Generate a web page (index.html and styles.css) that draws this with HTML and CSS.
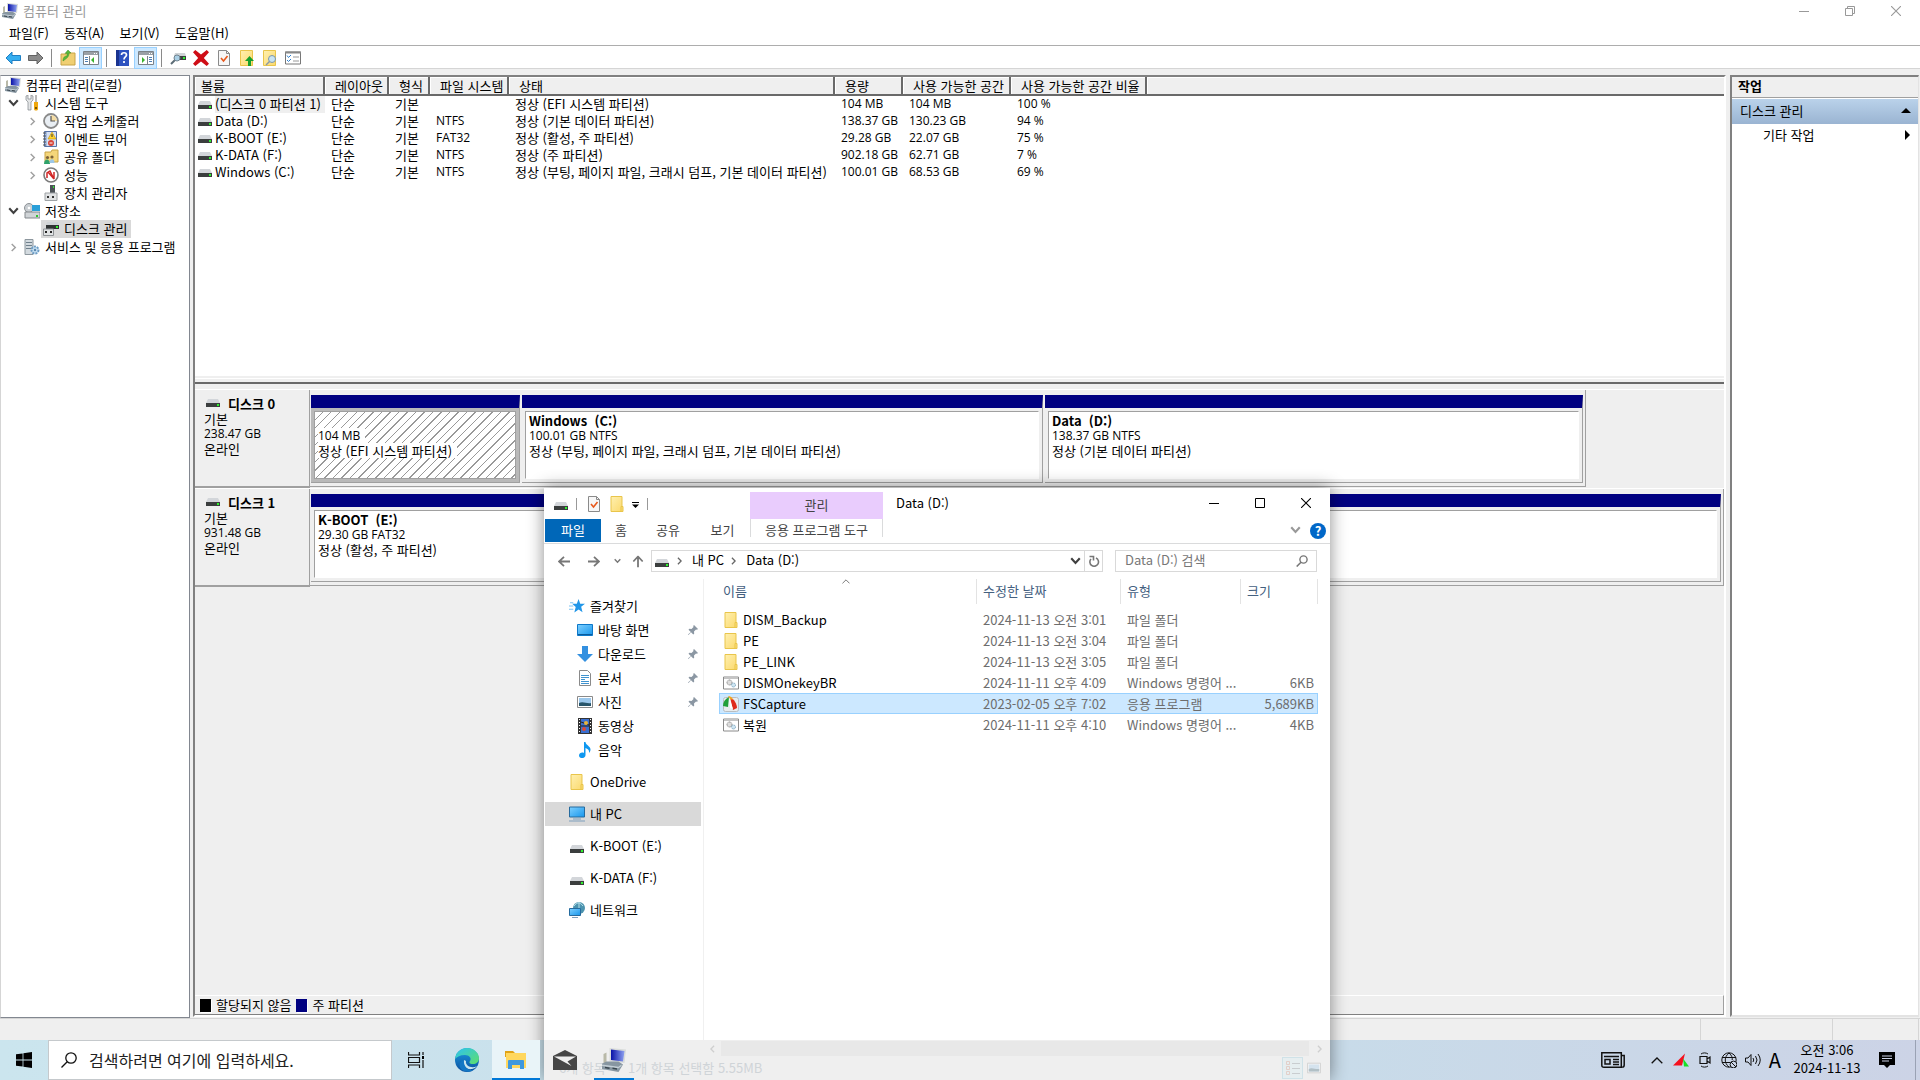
FILE: index.html
```html
<!DOCTYPE html>
<html lang="ko">
<head>
<meta charset="utf-8">
<title>컴퓨터 관리</title>
<link rel="stylesheet" href="styles.css">
</head>
<body>
<svg class="defs" aria-hidden="true">
  <defs>
    <linearGradient id="g-blue" x1="0" y1="0" x2="1" y2="1"><stop offset="0" stop-color="#7fd0ff"/><stop offset="1" stop-color="#1796ec"/></linearGradient>
    <linearGradient id="g-screen" x1="0" y1="0" x2="1" y2="0"><stop offset="0" stop-color="#0a12a8"/><stop offset="1" stop-color="#8fa2f0"/></linearGradient>
    <linearGradient id="g-folder" x1="0" y1="0" x2="1" y2="1"><stop offset="0" stop-color="#fff0b0"/><stop offset="1" stop-color="#fbd96c"/></linearGradient>
    <linearGradient id="g-edge" x1="0" y1="0" x2="1" y2="1"><stop offset="0" stop-color="#2cc3f2"/><stop offset="1" stop-color="#5fdf6a"/></linearGradient>
    <linearGradient id="g-edge2" x1="0" y1="0" x2="0" y2="1"><stop offset="0" stop-color="#1b9de2"/><stop offset="1" stop-color="#0c4f9e"/></linearGradient>
  </defs>
  <symbol id="i-mgmt" viewBox="0 0 16 16"><path d="M1 4l2-1v7H1z" fill="#b9b9a8"/><path d="M5 0l11 1-1 9-10-1z" fill="#d9dcda"/><path d="M6 1l9 1-1 7-8-1z" fill="url(#g-screen)"/><path d="M0 10.500L3 9h8l3 2-3 5-11-2z" fill="#8796a1"/><path d="M0 11l11 1.500L13 11v1l-2 1.500L0 12z" fill="#c4cfd6"/><path d="M2 12.500l3 .5v1l-3-.5zM7 13l3 .5v1L7 14z" fill="#39464f"/></symbol>
  <symbol id="i-drive" viewBox="0 0 14 8"><path d="M2 0h10l2 4H0z" fill="#d3d6da"/><path d="M0 4h14v4H0z" fill="#3b3e3e"/><path d="M11 5h2v2h-2z" fill="#2ef32e"/></symbol>
  <symbol id="i-back" viewBox="0 0 16 14"><path d="M1 7l6-6v3.500h8.500v5H7V13z" fill="#35aef0" stroke="#1f7fc4"/></symbol>
  <symbol id="i-fwd" viewBox="0 0 16 14"><path d="M15 7L9 1v3.500H.5v5H9V13z" fill="#8b8b8b" stroke="#626262"/></symbol>
  <symbol id="i-up" viewBox="0 0 16 16"><path d="M1 4h5l1-1h8v12H1z" fill="#f0cf72" stroke="#c9a447"/><path d="M3 11c0-4 2-5 4-5V3l-2 .5L8 0l3 3H9c0 4-2 5-6 8z" fill="#58b93a" stroke="#3a8f25" stroke-width=".5"/></symbol>
  <symbol id="i-paneL" viewBox="0 0 16 14"><path d="M.5.500h15v13H.5z" fill="#fff" stroke="#7b8288"/><path d="M1 1h14v3H1z" fill="#9aa0a6"/><path d="M11 2h1v1h-1zM13 2h1v1h-1z" fill="#fff"/><path d="M6.500 5v8" stroke="#7b8288"/><path d="M2 6.500h3M2 8.500h3M2 10.500h3" stroke="#4d7fb5"/><path d="M11 6v6L8 9z" fill="#39b32c"/></symbol>
  <symbol id="i-paneR" viewBox="0 0 16 14"><path d="M.5.500h15v13H.5z" fill="#fff" stroke="#7b8288"/><path d="M1 1h14v3H1z" fill="#9aa0a6"/><path d="M11 2h1v1h-1zM13 2h1v1h-1z" fill="#fff"/><path d="M9.500 5v8" stroke="#7b8288"/><path d="M11 6.500h3M11 8.500h3M11 10.500h3" stroke="#4d7fb5"/><path d="M4 6v6l3-3z" fill="#39b32c"/></symbol>
  <symbol id="i-helpbook" viewBox="0 0 14 16"><path d="M0 0h13v16H0z" fill="#2d52c0"/><path d="M0 0h3v16H0z" fill="#1a3490"/><path d="M5.500 5c0-3 5-3 5 0 0 2-2.500 2-2.500 4.500M8 11v2" fill="none" stroke="#fff" stroke-width="1.700"/></symbol>
  <symbol id="i-diskfind" viewBox="0 0 16 14"><path d="M5 2h10l1 3H4z" fill="#cfd3d6"/><path d="M4 5h12v4H4z" fill="#3b3e3e"/><path d="M13 6h2v2h-2z" fill="#2ef32e"/><path d="M1 13l4-4" stroke="#5b6b75" stroke-width="2"/><circle cx="7" cy="7" r="3" fill="#a9cfe5" stroke="#71838f"/></symbol>
  <symbol id="i-x" viewBox="0 0 14 14"><path d="M2 0l5 4 5-4 2 2-4.500 5L14 12l-2 2-5-4-5 4-2-2 4.500-5L0 2z" fill="#cf0d16"/></symbol>
  <symbol id="i-doccheck" viewBox="0 0 12 16"><path d="M.5.500h8l3 3v12H.5z" fill="#f7f7f7" stroke="#8a8a8a"/><path d="M8.500.5v3h3" fill="none" stroke="#8a8a8a"/><path d="M3 8l2.500 3L9.500 6" fill="none" stroke="#e8591c" stroke-width="1.600"/></symbol>
  <symbol id="i-folder" viewBox="0 0 13 16"><path d="M.5.500h11v10h1v5H.5z" fill="url(#g-folder)" stroke="#e9c54b"/><path d="M10.500 15.500v-5h2" fill="none" stroke="#e9c54b"/></symbol>
  <symbol id="i-folderup" viewBox="0 0 14 16"><path d="M.5.500h12v15H.5z" fill="url(#g-folder)" stroke="#e9c54b"/><path d="M9.500 6L14 11h-3v5H8v-5H5z" fill="#16a02a"/></symbol>
  <symbol id="i-foldfind" viewBox="0 0 14 16"><path d="M.5.500h12v15H.5z" fill="url(#g-folder)" stroke="#e9c54b"/><path d="M3 15l4-4" stroke="#8a9aa5" stroke-width="1.500"/><circle cx="9" cy="9" r="3.500" fill="#c8e4f4" stroke="#7d97a8"/></symbol>
  <symbol id="i-list" viewBox="0 0 16 13"><path d="M.5.500h15v12H.5z" fill="#fff" stroke="#777" /><path d="M0 0h16v2H0z" fill="#888"/><path d="M2 4l1.500 2L6 3.500M2 8.500L3.500 10 6 7.500" fill="none" stroke="#2c7fd0"/><path d="M8 5.500h6M8 9.500h6" stroke="#999"/></symbol>
  <symbol id="i-tools" viewBox="0 0 16 16"><path d="M2 1v4l2 2v8h3V7l2-2V1L7 0v4H4V0z" fill="#e3e5e6" stroke="#7f8589" stroke-width=".7"/><path d="M11 0h2v7h-2z" fill="#b9b9b9"/><path d="M10 7h4v7c0 2-4 2-4 0z" fill="#f0a80e"/><path d="M11 12h2v2h-2z" fill="#7c5600"/></symbol>
  <symbol id="i-clock" viewBox="0 0 16 16"><circle cx="8" cy="8" r="7" fill="#e9eef3" stroke="#8a8a8a" stroke-width="1.800"/><path d="M8 8V2a6 6 0 0 1 6 6z" fill="#f4dca4"/><path d="M8 3v5h4" fill="none" stroke="#555" stroke-width="1.200"/></symbol>
  <symbol id="i-event" viewBox="0 0 16 16"><path d="M1.500.5h12v15h-12z" fill="#a7bde0" stroke="#5773a8"/><path d="M0 2h3M0 5h3M0 8h3M0 11h3M0 14h3" stroke="#555"/><path d="M4 1h9v14H4z" fill="#d5e0f2"/><path d="M9 1l4 7H5z" fill="#ffd42d" stroke="#c58d00" stroke-width=".6"/><path d="M9 3v3" stroke="#333"/><circle cx="8" cy="12" r="3" fill="#d84438"/><path d="M6.500 12h3" stroke="#fff"/></symbol>
  <symbol id="i-share" viewBox="0 0 16 16"><path d="M2 3h6l1-2h6v12H2z" fill="#f5d67a" stroke="#c9a447"/><circle cx="4.500" cy="8.500" r="1.600" fill="#7d6238"/><circle cx="9" cy="8" r="1.600" fill="#7d6238"/><path d="M1 15c0-6 6-6 6 0z" fill="#2fa26b"/><path d="M6.500 14c0-5 5-5 5 0z" fill="#9cc7e8"/></symbol>
  <symbol id="i-perf" viewBox="0 0 16 16"><circle cx="8" cy="8" r="7" fill="#fff" stroke="#7b7b7b" stroke-width="1.600"/><path d="M4 11V6l3-2 4 8V5M5 5l6 7" fill="none" stroke="#d12626" stroke-width="1.500"/></symbol>
  <symbol id="i-device" viewBox="0 0 16 16"><path d="M7 0h5v9H7z" fill="#4d5358"/><path d="M10 1h1v2h-1z" fill="#2ef32e"/><path d="M2 8h12v7.500H2z" fill="#e1e3e4" stroke="#9ea2a5"/><path d="M4 11h2v2H4zM9 11h2v2H9z" fill="#333"/></symbol>
  <symbol id="i-storage" viewBox="0 0 16 16"><circle cx="5" cy="5" r="4.500" fill="#c9ced2" stroke="#8d9296"/><circle cx="5" cy="5" r="1.300" fill="#fff"/><path d="M8 2h8v6H8z" fill="#2a9fd8"/><path d="M1 9h15v6H1z" fill="#d0d4d7" stroke="#83888c"/><path d="M12 12h2v2h-2z" fill="#2ec62e"/></symbol>
  <symbol id="i-diskmgmt" viewBox="0 0 16 14"><path d="M4 0h11l1 3H3z" fill="#cfd3d6"/><path d="M3 3h13v4H3z" fill="#2f3232"/><path d="M13 4h2v2h-2z" fill="#2ef32e"/><path d="M.5 7h10v6.500H.5z" fill="#e1e3e4" stroke="#8d9194"/><path d="M2 9h2v2H2zM7 9h2v2H7z" fill="#222"/></symbol>
  <symbol id="i-services" viewBox="0 0 16 16"><path d="M1 .5h8v15H1z" fill="#d3dadf" stroke="#8d979e"/><path d="M2 3.500h6M2 6.500h6M2 9.500h6" stroke="#70808c"/><circle cx="11" cy="11" r="3.500" fill="#c5dff2" stroke="#6d9cc4" stroke-width="2" stroke-dasharray="2 1"/><circle cx="11" cy="11" r="1.200" fill="#5b86ab"/></symbol>
  <symbol id="i-down" viewBox="0 0 8 6"><path d="M.8 1L4 4.500 7.200 1" fill="none" stroke="currentColor" stroke-width="1.600"/></symbol>
  <symbol id="i-right" viewBox="0 0 6 10"><path d="M1 1l4 4-4 4" fill="none" stroke="currentColor" stroke-width="1.600"/></symbol>
  <symbol id="i-min" viewBox="0 0 10 10"><path d="M0 5.500h10" stroke="currentColor"/></symbol>
  <symbol id="i-max" viewBox="0 0 10 10"><path d="M.5.500h9v9h-9z" fill="none" stroke="currentColor"/></symbol>
  <symbol id="i-restore" viewBox="0 0 10 10"><path d="M.5 2.500h7v7h-7zM2.500 2V.5h7v7H8" fill="none" stroke="currentColor"/></symbol>
  <symbol id="i-close" viewBox="0 0 10 10"><path d="M0 0l10 10M10 0L0 10" stroke="currentColor" stroke-width="1.100"/></symbol>
  <symbol id="i-arrow" viewBox="0 0 12 11"><path d="M12 5.500H1M6 .8L1 5.500l5 4.700" fill="none" stroke="currentColor" stroke-width="1.800"/></symbol>
  <symbol id="i-refresh" viewBox="0 0 11 12"><path d="M2.500 4A4.300 4.300 0 1 0 7.500 3M1 1.500h4v4" fill="none" stroke="currentColor" stroke-width="1.600"/></symbol>
  <symbol id="i-search" viewBox="0 0 12 12"><circle cx="7.500" cy="4.500" r="3.600" fill="none" stroke="currentColor" stroke-width="1.400"/><path d="M5 7.200L.7 11.500" stroke="currentColor" stroke-width="1.600"/></symbol>
  <symbol id="i-pin" viewBox="0 0 10 10"><path d="M6 0l4 4-1 .8-1-.3-2 2 .2 2.200-.9.800L3 7.200.5 10 0 9.500 2.800 7 .5 4.700l.8-.9 2.200.2 2-2L5.200 1z" fill="#8b97a3"/></symbol>
  <symbol id="i-star" viewBox="0 0 15 13"><path d="M9 0l1.500 4.300L15 4.500l-3.600 2.800 1.300 5L9 9.700 5 12.500l1.300-5L3 4.500h4.300z" fill="#2196e8"/><path d="M1 3.500h3M0 6.500h4M0 9.500h4" stroke="#7cc3f4"/></symbol>
  <symbol id="i-desktop" viewBox="0 0 16 12"><path d="M.5.500h15v11H.5z" fill="url(#g-blue)" stroke="#0d78c9"/><path d="M1 10h14v1H1z" fill="#0a5b9c"/></symbol>
  <symbol id="i-download" viewBox="0 0 16 16"><path d="M5 0h6v8h5l-8 8-8-8h5z" fill="#3390e0"/></symbol>
  <symbol id="i-doc" viewBox="0 0 12 16"><path d="M.5.500h8l3 3v12H.5z" fill="#fff" stroke="#8a8a8a"/><path d="M2 5.500h8M2 7.500h8M2 9.500h4M2 11.500h8M2 13.500h8" stroke="#3f93cf"/></symbol>
  <symbol id="i-picture" viewBox="0 0 16 12"><path d="M.5.500h15v11H.5z" fill="#fff" stroke="#8a8a8a"/><path d="M2 2h12v8H2z" fill="#9cc8ec"/><path d="M2 7c4-2 8 1 12 0v3H2z" fill="#28556a"/></symbol>
  <symbol id="i-video" viewBox="0 0 14 16"><path d="M0 0h14v16H0z" fill="#333"/><path d="M3 1h8v14H3z" fill="#3a6fd0"/><path d="M3 8h8M3 4l8 3" stroke="#222"/><circle cx="8" cy="5" r="2" fill="#e8b53a"/><circle cx="6" cy="11" r="2" fill="#d84a38"/><path d="M1.500 1v15M12.500 1v15" stroke="#fff" stroke-dasharray="1 2"/></symbol>
  <symbol id="i-music" viewBox="0 0 12 16"><path d="M5 0h1.500c0 3 5 4 5 7.500 0 2-1 3-1.500 3.500.5-3-1-4-3.500-5v7c0 4-6.500 4-6.500.5C0 11 3 10 5 11z" fill="#0f98f0"/></symbol>
  <symbol id="i-pc" viewBox="0 0 16 15"><path d="M.5.500h15v10H.5z" fill="url(#g-blue)" stroke="#256a9e"/><path d="M4 12h8v1H4zM0 14h16v1H0z" fill="#7fa0bd"/></symbol>
  <symbol id="i-net" viewBox="0 0 16 16"><circle cx="10" cy="6" r="6" fill="#4c93ae"/><path d="M5 4c3-4 6-4 9 0M10 0v12" stroke="#b8e0ea" fill="none"/><path d="M.5 6.500h11v7H.5z" fill="url(#g-blue)" stroke="#256a9e"/><path d="M3 15h6v1H3z" fill="#7fa0bd"/></symbol>
  <symbol id="i-bat" viewBox="0 0 16 13"><path d="M.5.500h15v12H.5z" fill="#fff" stroke="#8a8a8a"/><path d="M1 1h14v1.500H1z" fill="#c4c4c4"/><circle cx="6.500" cy="6" r="2.500" fill="#ddd" stroke="#888" stroke-dasharray="1.200 .6"/><circle cx="10.500" cy="8.500" r="2" fill="#cfe6f3" stroke="#7aa4bd" stroke-dasharray="1.200 .6"/></symbol>
  <symbol id="i-fs" viewBox="0 0 16 16"><rect x=".5" y="1.500" width="15" height="14" rx="2" fill="#e8ecee" stroke="#b9bdc0"/><path d="M6 1C2 3 0 6 0 10l5 1z" fill="#21a03a"/><path d="M7 1c4 2 7 7 7 11l-4 2z" fill="#df2a1c"/><path d="M6 1l1 11 3 1z" fill="#fff"/><path d="M5 0c3 0 4 2 5 4L7 3z" fill="#f4a81c"/></symbol>
  <symbol id="i-win" viewBox="0 0 16 16"><path d="M0 2.300l6.600-.9v6.200H0zM7.400 1.200L16 0v7.600H7.400zM0 8.400h6.600v6.200L0 13.700zM7.400 8.400H16V16l-8.600-1.200z"/></symbol>
  <symbol id="i-search2" viewBox="0 0 16 16"><circle cx="10" cy="6" r="5.200" fill="none" stroke="#111" stroke-width="1.300"/><path d="M6.200 9.800L.5 15.500" stroke="#111" stroke-width="1.300"/></symbol>
  <symbol id="i-taskview" viewBox="0 0 16 16"><path d="M.5 0v3h11V0M.5 16v-3h11v3M.5 5.500h11v5H.5z" fill="none" stroke="#111" stroke-width="1.200"/><path d="M15 0v3M15 8v8" stroke="#111" stroke-width="1.200"/><path d="M14 4h2v3h-2z"/></symbol>
  <symbol id="i-edge" viewBox="0 0 24 24"><circle cx="12" cy="12" r="12" fill="url(#g-edge2)"/><path d="M0 11C1 4 6 0 12 0c7 0 12 5 12 10 0 4-3 6-6 6-4 0-4-2-3-3 2-3-1-6-5-6-5 0-8 2-10 4z" fill="url(#g-edge)"/><path d="M9 12c-2 5 2 10 8 9 2-.5 4-1.500 5-3-5 3-12 0-11-5z" fill="#cbe5ee"/><path d="M9 12c-1 5 3 11 9 10-3 2.500-9 2.500-12-1-3-4-1-8 3-9z" fill="#1577c4"/></symbol>
  <symbol id="i-explorer" viewBox="0 0 22 18"><path d="M0 0h8l2 2h10v4H0z" fill="#e0a216"/><path d="M1 2h20v15H1z" fill="#ffd75e"/><path d="M3 18V10q0-1 1-1h14q1 0 1 1v8h-4v-4H7v4z" fill="#3f98dd"/></symbol>
  <symbol id="i-mail" viewBox="0 0 24 20"><path d="M0 6l12-6 12 6v14H0z" fill="#464646"/><path d="M1 6.500h22l-8.500 5 4 4.500z" fill="#efefef"/></symbol>
  <symbol id="i-news" viewBox="0 0 24 16"><path d="M.8.800h19.500v14.400H3q-2.200 0-2.200-2z" fill="none" stroke="#111" stroke-width="1.500"/><path d="M20 3.500h3.200V13q0 2.200-2 2.200" fill="none" stroke="#111" stroke-width="1.500"/><path d="M3 4.500h15M12 7.500h6M12 10h6M12 12.500h6" stroke="#111" stroke-width="1.300"/><path d="M4 7.500h5v4.500H4z" fill="none" stroke="#111" stroke-width="1.500"/></symbol>
  <symbol id="i-chevup" viewBox="0 0 12 7"><path d="M.7 6.300L6 1l5.300 5.300" fill="none" stroke="currentColor" stroke-width="1.300"/></symbol>
  <symbol id="i-rg" viewBox="0 0 16 13"><path d="M12 0L9 12H0z" fill="#f5101e"/><path d="M10 5l6 8h-5z" fill="#17e024"/></symbol>
  <symbol id="i-meet" viewBox="0 0 12 16"><path d="M1 4.500h7v7H1zM8 7l3-2v6L8 9" fill="none" stroke="#111" stroke-width="1.200"/><path d="M2 2c2-1.500 5-1.500 7 0M2 14c2 1.500 5 1.500 7 0" fill="none" stroke="#111"/></symbol>
  <symbol id="i-globe" viewBox="0 0 16 16"><circle cx="8" cy="8" r="7.200" fill="none" stroke="#111"/><path d="M1 5.500h14M1 10.500h8M8 1C3 5 3 11 8 15M8 1c3 2.500 3.500 5 3.200 7" fill="none" stroke="#111"/><circle cx="12.500" cy="12.500" r="3.400" fill="#ccd6e8" stroke="#111"/><path d="M10 10l5 5" stroke="#111"/></symbol>
  <symbol id="i-vol" viewBox="0 0 16 14"><path d="M.5 5v4H3l3 3.500v-11L3 5zM8 5q1.500 2 0 4M10.500 3q3 4 0 8M13 1q4.500 6 0 12" fill="none" stroke="#111"/></symbol>
  <symbol id="i-action" viewBox="0 0 16 16"><path d="M0 0h16v13h-5l-3 3-3-3H0z"/><path d="M3 4h10M3 6.500h10M3 9h7" stroke="#ccd3e6"/></symbol>
  <symbol id="i-details" viewBox="0 0 14 14"><path d="M.5.500h3v3h-3zM.5 5.500h3v3h-3zM.5 10.500h3v3h-3z" fill="none" stroke="#e3cfc9"/><path d="M6 2.500h8M6 7.500h8M6 12.500h8" stroke="#c9cdd0"/></symbol>
</svg>

<div class="console">
  <header class="titlebar">
    <svg class="s16"><use href="#i-mgmt"/></svg>
    <h1>컴퓨터 관리</h1>
    <div class="winbtns">
      <button aria-label="최소화"><svg class="s10"><use href="#i-min"/></svg></button>
      <button aria-label="이전 크기로"><svg class="s10"><use href="#i-restore"/></svg></button>
      <button aria-label="닫기"><svg class="s10"><use href="#i-close"/></svg></button>
    </div>
  </header>
  <nav class="menubar">
    <button>파일(F)</button><button>동작(A)</button><button>보기(V)</button><button>도움말(H)</button>
  </nav>
  <div class="toolbar">
    <button aria-label="뒤로"><svg class="s16"><use href="#i-back"/></svg></button>
    <button aria-label="앞으로"><svg class="s16"><use href="#i-fwd"/></svg></button>
    <span class="sep"></span>
    <button aria-label="위로"><svg class="s16"><use href="#i-up"/></svg></button>
    <button class="on" aria-label="콘솔 트리"><svg class="s16"><use href="#i-paneL"/></svg></button>
    <span class="sep"></span>
    <button aria-label="도움말"><svg class="s16"><use href="#i-helpbook"/></svg></button>
    <button class="on" aria-label="작업 창"><svg class="s16"><use href="#i-paneR"/></svg></button>
    <span class="sep"></span>
    <button aria-label="다시 검사"><svg class="s16"><use href="#i-diskfind"/></svg></button>
    <button aria-label="삭제"><svg class="s16"><use href="#i-x"/></svg></button>
    <button aria-label="속성"><svg class="s16"><use href="#i-doccheck"/></svg></button>
    <button aria-label="열기"><svg class="s16"><use href="#i-folderup"/></svg></button>
    <button aria-label="탐색"><svg class="s16"><use href="#i-foldfind"/></svg></button>
    <button aria-label="목록"><svg class="s16"><use href="#i-list"/></svg></button>
  </div>

  <main class="panes">
    <nav class="tree">
      <a href="#" class="root"><svg class="s16"><use href="#i-mgmt"/></svg>컴퓨터 관리(로컬)</a>
      <a href="#"><svg class="tw open"><use href="#i-down"/></svg><svg class="s16"><use href="#i-tools"/></svg>시스템 도구</a>
      <a href="#" class="sub"><svg class="tw"><use href="#i-right"/></svg><svg class="s16"><use href="#i-clock"/></svg>작업 스케줄러</a>
      <a href="#" class="sub"><svg class="tw"><use href="#i-right"/></svg><svg class="s16"><use href="#i-event"/></svg>이벤트 뷰어</a>
      <a href="#" class="sub"><svg class="tw"><use href="#i-right"/></svg><svg class="s16"><use href="#i-share"/></svg>공유 폴더</a>
      <a href="#" class="sub"><svg class="tw"><use href="#i-right"/></svg><svg class="s16"><use href="#i-perf"/></svg>성능</a>
      <a href="#" class="sub"><span class="tw"></span><svg class="s16"><use href="#i-device"/></svg>장치 관리자</a>
      <a href="#"><svg class="tw open"><use href="#i-down"/></svg><svg class="s16"><use href="#i-storage"/></svg>저장소</a>
      <a href="#" class="sub"><span class="tw"></span><span class="picked"><svg class="s16"><use href="#i-diskmgmt"/></svg>디스크 관리</span></a>
      <a href="#"><svg class="tw"><use href="#i-right"/></svg><svg class="s16"><use href="#i-services"/></svg>서비스 및 응용 프로그램</a>
    </nav>

    <section class="disks">
      <div class="volumes">
        <table>
          <colgroup><col class="c130"><col class="c64"><col class="c41"><col class="c79"><col class="c326"><col class="c68"><col class="c108"><col class="c136"><col></colgroup>
          <thead><tr><th>볼륨</th><th>레이아웃</th><th>형식</th><th>파일 시스템</th><th>상태</th><th>용량</th><th>사용 가능한 공간</th><th>사용 가능한 공간 비율</th><th></th></tr></thead>
          <tbody>
            <tr><td><svg class="dr"><use href="#i-drive"/></svg><span class="hot">(디스크 0 파티션 1)</span></td><td>단순</td><td>기본</td><td class="lat"></td><td>정상 (EFI 시스템 파티션)</td><td class="lat">104 MB</td><td class="lat">104 MB</td><td class="lat">100 %</td><td></td></tr>
            <tr><td><svg class="dr"><use href="#i-drive"/></svg><span>Data (D:)</span></td><td>단순</td><td>기본</td><td class="lat">NTFS</td><td>정상 (기본 데이터 파티션)</td><td class="lat">138.37 GB</td><td class="lat">130.23 GB</td><td class="lat">94 %</td><td></td></tr>
            <tr><td><svg class="dr"><use href="#i-drive"/></svg><span>K-BOOT (E:)</span></td><td>단순</td><td>기본</td><td class="lat">FAT32</td><td>정상 (활성, 주 파티션)</td><td class="lat">29.28 GB</td><td class="lat">22.07 GB</td><td class="lat">75 %</td><td></td></tr>
            <tr><td><svg class="dr"><use href="#i-drive"/></svg><span>K-DATA (F:)</span></td><td>단순</td><td>기본</td><td class="lat">NTFS</td><td>정상 (주 파티션)</td><td class="lat">902.18 GB</td><td class="lat">62.71 GB</td><td class="lat">7 %</td><td></td></tr>
            <tr><td><svg class="dr"><use href="#i-drive"/></svg><span>Windows (C:)</span></td><td>단순</td><td>기본</td><td class="lat">NTFS</td><td>정상 (부팅, 페이지 파일, 크래시 덤프, 기본 데이터 파티션)</td><td class="lat">100.01 GB</td><td class="lat">68.53 GB</td><td class="lat">69 %</td><td></td></tr>
          </tbody>
        </table>
      </div>
      <div class="splitter"></div>
      <div class="graph">
        <article class="disk">
          <div class="label"><h2><svg class="dr"><use href="#i-drive"/></svg>디스크 0</h2><p>기본</p><p class="lat">238.47 GB</p><p>온라인</p></div>
          <div class="parts" style="width:1276px">
            <div class="part efi" style="flex-grow:202"><div class="box"><p></p><p><mark class="lat">104 MB</mark></p><p><mark>정상 (EFI 시스템 파티션)</mark></p></div></div>
            <div class="part" style="flex-grow:514"><div class="box"><h3>Windows&nbsp; (C:)</h3><p class="lat">100.01 GB NTFS</p><p>정상 (부팅, 페이지 파일, 크래시 덤프, 기본 데이터 파티션)</p></div></div>
            <div class="part" style="flex-grow:531"><div class="box"><h3>Data&nbsp; (D:)</h3><p class="lat">138.37 GB NTFS</p><p>정상 (기본 데이터 파티션)</p></div></div>
          </div>
        </article>
        <article class="disk">
          <div class="label"><h2><svg class="dr"><use href="#i-drive"/></svg>디스크 1</h2><p>기본</p><p class="lat">931.48 GB</p><p>온라인</p></div>
          <div class="parts" style="width:100%">
            <div class="part" style="flex-grow:1"><div class="box"><h3>K-BOOT&nbsp; (E:)</h3><p class="lat">29.30 GB FAT32</p><p>정상 (활성, 주 파티션)</p></div></div>
          </div>
        </article>
      </div>
      <div class="legend"><i class="black"></i><span>할당되지 않음</span><i class="navy"></i><span>주 파티션</span></div>
    </section>

    <aside class="actions">
      <h2>작업</h2>
      <button class="group">디스크 관리<svg class="tri" viewBox="0 0 10 5"><path d="M5 0l5 5H0z"/></svg></button>
      <button class="more">기타 작업<svg class="trir" viewBox="0 0 5 10"><path d="M0 0l5 5-5 5z"/></svg></button>
    </aside>
  </main>
  <footer class="status"><span class="grow"></span><span class="c132"></span><span class="c86"></span></footer>
</div>

<section class="window">
  <header class="wtitle">
    <div class="quick">
      <svg class="dr"><use href="#i-drive"/></svg><span class="bar"></span>
      <button aria-label="속성"><svg class="s16"><use href="#i-doccheck"/></svg></button>
      <button aria-label="새 폴더"><svg class="s16"><use href="#i-folder"/></svg></button>
      <button aria-label="사용자 지정"><svg class="cust" viewBox="0 0 7 6"><path d="M0 0h7v1H0zM0 2.500h7L3.500 6z"/></svg></button><span class="bar"></span>
    </div>
    <div class="ctx">관리</div>
    <h2>Data (D:)</h2>
    <div class="winbtns">
      <button aria-label="최소화"><svg class="s10"><use href="#i-min"/></svg></button>
      <button aria-label="최대화"><svg class="s10"><use href="#i-max"/></svg></button>
      <button aria-label="닫기"><svg class="s10"><use href="#i-close"/></svg></button>
    </div>
  </header>
  <nav class="tabs">
    <button class="file">파일</button><button class="home">홈</button><button class="shareb">공유</button><button class="view">보기</button><button class="tool">응용 프로그램 도구</button>
    <span class="grow"></span>
    <button class="fold" aria-label="리본 최소화"><svg class="tw open"><use href="#i-down"/></svg></button>
    <button class="help" aria-label="도움말">?</button>
  </nav>
  <div class="address">
    <button aria-label="뒤로"><svg class="arr"><use href="#i-arrow"/></svg></button>
    <button aria-label="앞으로"><svg class="arr flip"><use href="#i-arrow"/></svg></button>
    <button class="slim" aria-label="최근"><svg class="tiny"><use href="#i-down"/></svg></button>
    <button class="upb" aria-label="위로"><svg class="arr turn"><use href="#i-arrow"/></svg></button>
    <div class="crumbs">
      <svg class="dr"><use href="#i-drive"/></svg><svg class="gt"><use href="#i-right"/></svg><a href="#">내 PC</a><svg class="gt"><use href="#i-right"/></svg><a href="#">Data (D:)</a>
      <span class="grow"></span><button aria-label="이전 위치"><svg class="tw open"><use href="#i-down"/></svg></button><button class="ref" aria-label="새로 고침"><svg class="s12"><use href="#i-refresh"/></svg></button>
    </div>
    <div class="find"><input type="text" aria-label="검색" placeholder="Data (D:) 검색"><svg class="s12"><use href="#i-search"/></svg></div>
  </div>
  <div class="wbody">
    <nav class="places">
      <a href="#" class="top"><svg class="s16"><use href="#i-star"/></svg>즐겨찾기</a>
      <a href="#"><svg class="s16"><use href="#i-desktop"/></svg>바탕 화면<svg class="pin"><use href="#i-pin"/></svg></a>
      <a href="#"><svg class="s16"><use href="#i-download"/></svg>다운로드<svg class="pin"><use href="#i-pin"/></svg></a>
      <a href="#"><svg class="s16"><use href="#i-doc"/></svg>문서<svg class="pin"><use href="#i-pin"/></svg></a>
      <a href="#"><svg class="s16"><use href="#i-picture"/></svg>사진<svg class="pin"><use href="#i-pin"/></svg></a>
      <a href="#"><svg class="s16"><use href="#i-video"/></svg>동영상</a>
      <a href="#"><svg class="s16"><use href="#i-music"/></svg>음악</a>
      <a href="#" class="top"><svg class="s16"><use href="#i-folder"/></svg>OneDrive</a>
      <a href="#" class="top cur"><svg class="s16"><use href="#i-pc"/></svg>내 PC</a>
      <a href="#" class="top"><svg class="s16 low"><use href="#i-drive"/></svg>K-BOOT (E:)</a>
      <a href="#" class="top"><svg class="s16 low"><use href="#i-drive"/></svg>K-DATA (F:)</a>
      <a href="#" class="top"><svg class="s16"><use href="#i-net"/></svg>네트워크</a>
    </nav>
    <div class="files">
      <svg class="sort"><use href="#i-chevup"/></svg>
      <table>
        <colgroup><col class="f258"><col class="f144"><col class="f120"><col class="f77"></colgroup>
        <thead><tr><th>이름</th><th>수정한 날짜</th><th>유형</th><th>크기</th></tr></thead>
        <tbody>
          <tr><td><svg class="s16"><use href="#i-folder"/></svg>DISM_Backup</td><td>2024-11-13 오전 3:01</td><td>파일 폴더</td><td></td></tr>
          <tr><td><svg class="s16"><use href="#i-folder"/></svg>PE</td><td>2024-11-13 오전 3:04</td><td>파일 폴더</td><td></td></tr>
          <tr><td><svg class="s16"><use href="#i-folder"/></svg>PE_LINK</td><td>2024-11-13 오전 3:05</td><td>파일 폴더</td><td></td></tr>
          <tr><td><svg class="s16"><use href="#i-bat"/></svg>DISMOnekeyBR</td><td>2024-11-11 오후 4:09</td><td>Windows 명령어 ...</td><td>6KB</td></tr>
          <tr class="sel"><td><svg class="s16"><use href="#i-fs"/></svg>FSCapture</td><td>2023-02-05 오후 7:02</td><td>응용 프로그램</td><td>5,689KB</td></tr>
          <tr><td><svg class="s16"><use href="#i-bat"/></svg>복원</td><td>2024-11-11 오후 4:10</td><td>Windows 명령어 ...</td><td>4KB</td></tr>
        </tbody>
      </table>
    </div>
  </div>
  <footer class="wfoot">
    <div class="hscroll"><svg class="gt flip"><use href="#i-right"/></svg><span class="track"></span><svg class="gt"><use href="#i-right"/></svg></div>
    <div class="wstatus"><span class="n1">6개 항목</span><span>1개 항목 선택함 5.55MB</span><span class="grow"></span><span class="det"><svg class="s14"><use href="#i-details"/></svg></span><svg class="s14 pale"><use href="#i-picture"/></svg></div>
  </footer>
</section>

<footer class="taskbar">
  <button class="start" aria-label="시작"><svg class="s16"><use href="#i-win"/></svg></button>
  <div class="tsearch"><svg class="s16"><use href="#i-search2"/></svg><input type="text" aria-label="작업 표시줄 검색" placeholder="검색하려면 여기에 입력하세요."></div>
  <button class="task" aria-label="작업 보기"><svg class="s16"><use href="#i-taskview"/></svg></button>
  <button class="task" aria-label="Edge"><svg class="s24"><use href="#i-edge"/></svg></button>
  <button class="task live active" aria-label="파일 탐색기"><svg class="s22"><use href="#i-explorer"/></svg></button>
  <button class="task" aria-label="메일"><svg class="s24"><use href="#i-mail"/></svg></button>
  <button class="task live inset" aria-label="컴퓨터 관리"><svg class="s24"><use href="#i-mgmt"/></svg></button>
  <span class="grow"></span>
  <div class="tray">
    <svg class="s24"><use href="#i-news"/></svg>
    <svg class="chv"><use href="#i-chevup"/></svg>
    <svg class="s16"><use href="#i-rg"/></svg>
    <svg class="s16"><use href="#i-meet"/></svg>
    <svg class="s16"><use href="#i-globe"/></svg>
    <svg class="s16"><use href="#i-vol"/></svg>
    <span class="ime">A</span>
  </div>
  <div class="clock"><span>오전 3:06</span><span>2024-11-13</span></div>
  <svg class="s16 act"><use href="#i-action"/></svg>
  <span class="peek"></span>
</footer>
</body>
</html>
```
FILE: styles.css
```css
* { box-sizing: border-box; margin: 0; padding: 0; }

body {
  position: relative;
  display: flex;
  flex-direction: column;
  min-height: 100vh;
  overflow: hidden;
  background: linear-gradient(to right, #cbe5ee 0, #c8dbe9 70%, #ccd3e6 100%);
  color: #000;
  font: 13px/18px "Noto Sans CJK KR", "Open Sans", sans-serif;
}

button, input { font: inherit; color: inherit; background: none; border: 0; }
button { display: flex; align-items: center; justify-content: center; white-space: nowrap; }
a { color: inherit; text-decoration: none; white-space: nowrap; }
svg { display: block; flex: none; fill: #000; }
h1, h2, h3 { font-size: 13px; line-height: inherit; font-weight: 400; white-space: nowrap; }
table { border-collapse: separate; border-spacing: 0; table-layout: fixed; width: 100%; }
th, td { text-align: left; font-weight: 400; white-space: nowrap; overflow: hidden; }
input::placeholder { color: inherit; opacity: 1; }

.defs { position: absolute; width: 0; height: 0; }
.lat { font-family: "Open Sans", sans-serif; font-size: 12px; }
.grow { flex: 1; }
.s10 { width: 10px; height: 10px; }
.s12 { width: 12px; height: 12px; }
.s14 { width: 14px; height: 14px; }
.s16 { width: 16px; height: 16px; }
.s22 { width: 22px; height: 22px; }
.s24 { width: 24px; height: 24px; }
.dr { width: 14px; height: 8px; }
.gt { width: 5px; height: 8px; color: #666; }
.flip { transform: rotate(180deg); }
.turn { transform: rotate(90deg); }

/* management console */
.console { flex: 1; display: flex; flex-direction: column; background: #efefef; }
.titlebar { display: flex; align-items: center; gap: 5px; height: 22px; padding-left: 2px; background: #fff; color: #999; }
.winbtns { display: flex; margin-left: auto; }
.winbtns button { width: 46px; height: 20px; }
.titlebar .winbtns { padding-right: 1px; }
.menubar { display: flex; gap: 15px; height: 24px; padding: 0 0 2px 9px; background: #fff; border-bottom: 1px solid #adadad; }
.toolbar { display: flex; align-items: center; height: 23px; padding: 1px 0 0 1px; background: #fff; border-bottom: 1px solid #d5d5d5; }
.toolbar button { width: 23px; height: 22px; border: 1px solid transparent; }
.toolbar .on { background: #cce8ff; border-color: #99d1ff; }
.sep { width: 1px; height: 18px; margin: 0 4px; background: #8a8a8a; }

.panes { flex: 1; display: flex; padding: 6px 1px 0 0; }
.tree { width: 190px; border: 1px solid #828790; border-left-color: #d5d5d5; background: #fff; padding-left: 4px; }
.tree a { display: flex; align-items: center; gap: 5px; height: 18px; padding-left: 3px; }
.tree .root { padding-left: 0; }
.tree .sub { padding-left: 22px; }
.tw { width: 11px; height: 9px; flex: none; color: #a0a0a0; }
.tw.open { height: 8px; color: #404040; }
.picked { display: flex; align-items: center; gap: 5px; height: 18px; padding: 0 4px 0 2px; margin-left: -2px; background: #d9d9d9; }

.disks {
  flex: 1;
  min-width: 0;
  display: flex;
  flex-direction: column;
  margin: 0 4px 1px 3px;
  border: 2px solid;
  border-color: #808080 #fff #fff #808080;
}
.volumes { height: 299px; background: #fff; }
.volumes th { height: 19px; line-height: 17px; padding-left: 10px; background: #efefef; border-bottom: 2px solid #696969; border-right: 2px solid #696969; box-shadow: inset 1px 1px #fff; }
.volumes th:first-child { padding-left: 6px; }
.volumes th:last-child { border-right: 0; }
.volumes td { height: 17px; line-height: 15px; padding-left: 6px; vertical-align: top; }
.volumes td:first-child { display: flex; gap: 3px; padding-left: 3px; }
.volumes .dr { margin-top: 5px; }
.hot { background: #efefef; padding-right: 4px; }
.c130 { width: 130px; } .c64 { width: 64px; } .c41 { width: 41px; } .c79 { width: 79px; }
.c326 { width: 326px; } .c68 { width: 68px; } .c108 { width: 108px; } .c136 { width: 136px; }
.splitter { height: 8px; border-bottom: 2px solid #696969; box-shadow: inset 0 2px #efefef, inset 0 3px #fff; }

.graph { flex: 1; padding-top: 5px; }
.disk { display: flex; height: 99px; border-top: 1px solid #fff; }
.label { width: 115px; flex: none; padding: 6px 9px; line-height: 15px; border-right: 1px solid #a0a0a0; border-bottom: 2px solid #a0a0a0; }
.label h2 { display: flex; align-items: center; gap: 8px; padding-left: 2px; font-weight: 700; }
.label .dr { margin-bottom: 2px; }
.parts { display: flex; gap: 2px; padding: 5px 2px 3px 1px; border-right: 1px solid #a0a0a0; border-bottom: 1px solid #a0a0a0; margin-bottom: 1px; }
.part { flex: 1 1 0; min-width: 0; padding: 3px; border-top: 13px solid #000080; border-right: 1px solid #a0a0a0; border-bottom: 1px solid #a0a0a0; }
.box { height: 100%; padding: 1px 0 0 3px; border: 1px solid; border-color: #a0a0a0 #fff #fff #a0a0a0; background: #fff; line-height: 15px; white-space: nowrap; overflow: hidden; }
.box h3 { font-weight: 700; }
.box p { height: 15px; }
.efi { background: #b9b9b9; }
.efi .box { border-color: #a0a0a0; background: repeating-linear-gradient(135deg, #fff 0 5px, #999 5px 6px); }
.efi mark { display: inline-block; height: 15px; background: #fff; padding-right: 5px; color: inherit; vertical-align: top; }

.legend { display: flex; align-items: center; gap: 5px; height: 20px; padding-left: 5px; border-top: 1px solid #fff; border-bottom: 1px solid #808080; border-right: 1px solid #a0a0a0; }
.legend i { width: 11px; height: 13px; background: #000; box-shadow: 1px 1px #fff; }
.legend .navy { background: #000080; }

.actions { width: 189px; margin-bottom: 1px; background: #fff; border: 2px solid; border-color: #808080 #e3e3e3 #e3e3e3 #808080; border-right-width: 1px; }
.actions h2 { height: 21px; line-height: 18px; padding-left: 6px; font-weight: 700; background: #efefef; border-bottom: 1px solid #a0a0a0; margin-bottom: 1px; }
.actions button { width: 100%; justify-content: space-between; }
.actions .group { height: 25px; padding: 0 7px 2px 8px; background: linear-gradient(#bad2ea, #9ab4d2); }
.actions .more { height: 21px; padding: 0 8px 0 31px; }
.tri { width: 10px; height: 5px; }
.trir { width: 5px; height: 10px; }

.status { display: flex; height: 22px; padding-right: 1px; border-top: 1px solid #d5d5d5; }
.status span { border-right: 1px solid #d5d5d5; }
.c132 { width: 132px; } .c86 { width: 86px; }

/* file explorer window */
.window {
  position: absolute;
  left: 544px;
  top: 488px;
  bottom: 0;
  width: 786px;
  z-index: 1;
  display: flex;
  flex-direction: column;
  background: #fff;
  box-shadow: 0 0 16px rgba(0, 0, 0, .45);
}
.wtitle { display: flex; height: 31px; }
.quick { display: flex; align-items: center; width: 206px; padding-left: 10px; }
.quick .dr { margin: 4px 8px 0 0; }
.quick .bar { width: 1px; height: 12px; background: #999; }
.quick button { margin-left: 7px; }
.quick .bar + button { margin-left: 9px; }
.quick .cust { width: 7px; height: 6px; margin: 2px 8px 0 0; }
.ctx { width: 133px; margin-top: 4px; line-height: 25px; text-align: center; background: #e9ccfd; color: #444; }
.wtitle h2 { padding-left: 13px; line-height: 30px; }
.wtitle .winbtns { height: 30px; padding-right: 1px; }
.wtitle .winbtns button { height: 30px; }
.tabs { display: flex; height: 25px; padding: 0 4px 0 1px; border-bottom: 1px solid #dadbdc; color: #444; }
.tabs button { height: 23px; padding-bottom: 1px; }
.tabs .file { width: 56px; background: #0067b8; color: #fff; }
.tabs .home { width: 40px; }
.tabs .shareb { width: 54px; }
.tabs .view { width: 55px; }
.tabs .tool { width: 133px; height: 18px; padding: 3px 0 0; border: 1px solid #dadbdc; border-width: 0 1px; }
.tabs .fold .tw { color: #999; }
.tabs .help { width: 16px; height: 16px; margin: 4px 0 0 9px; border-radius: 50%; background: #0067c8; color: #fff; font-weight: 700; line-height: 16px; }
.address { display: flex; align-items: flex-start; height: 35px; padding: 6px 13px 0 5px; color: #777; }
.address button { width: 30px; height: 22px; }
.address .slim { width: 20px; margin-left: -2px; }
.address .upb { width: 22px; margin-right: 2px; }
.arr { width: 12px; height: 11px; }
.tiny { width: 7px; height: 6px; }
.crumbs { display: flex; align-items: center; flex: 1; height: 22px; padding-left: 3px; border: 1px solid #d9d9d9; color: #000; line-height: 16px; }
.crumbs a { padding: 0 7px 2px 10px; }
.crumbs .dr { margin: 4px 8px 0 0; }
.crumbs button { width: 18px; height: 20px; color: #777; }
.crumbs .ref { border-left: 1px solid #d9d9d9; }
.find { display: flex; align-items: center; width: 202px; height: 22px; margin-left: 12px; padding: 0 8px 0 9px; border: 1px solid #d9d9d9; }
.find input { flex: 1; min-width: 0; padding-bottom: 2px; }

.wbody { flex: 1; display: flex; }
.places { width: 160px; padding: 15px 2px 0 1px; border-right: 1px solid #f0f0f0; }
.places a { display: flex; align-items: center; gap: 5px; height: 24px; padding: 0 3px 0 32px; }
.places .top { margin-bottom: 8px; padding-left: 24px; }
.places .top:first-child { margin-bottom: 0; }
.places a + .top:nth-child(8) { margin-top: 8px; }
.places .cur { background: #d9d9d9; }
.places .low { margin-top: 6px; padding: 0 1px; }
.pin { width: 10px; height: 10px; margin-left: auto; }
.files { position: relative; flex: 1; padding: 0 12px 0 15px; }
.files .sort { position: absolute; left: 138px; top: 0; width: 8px; height: 5px; color: #666; }
.files th { height: 25px; line-height: 23px; padding: 0 0 2px 6px; color: #44607f; border-right: 1px solid #e3e3e3; }
.files th:first-child { padding-left: 4px; }
.files thead::after { content: ""; display: block; height: 5px; }
.files td { height: 21px; line-height: 19px; padding-left: 6px; color: #6d6d6d; border: 1px solid transparent; border-width: 1px 0; }
.files td:first-child { color: #000; padding-left: 3px; border-left-width: 1px; }
.files td svg { display: inline-block; vertical-align: -3px; margin-right: 4px; }
.files td:last-child { text-align: right; padding-right: 3px; border-right-width: 1px; }
.files .sel td { background: #cce8ff; border-color: #99d1ff; }
.f258 { width: 258px; } .f144 { width: 144px; } .f120 { width: 120px; } .f77 { width: 77px; }

.wfoot { height: 40px; background: #efefef; color: #cfd4d8; }
.hscroll { display: flex; align-items: center; justify-content: space-between; height: 17px; padding: 0 8px 0 166px; }
.hscroll .gt { color: #cfcfcf; }
.track { flex: 1; height: 15px; margin: 0 8px 0 6px; background: #e8e8e8; }
.wstatus { display: flex; align-items: center; height: 22px; padding: 0 9px 0 15px; }
.n1 { width: 69px; }
.det { display: flex; align-items: center; justify-content: center; width: 21px; height: 22px; margin-right: 4px; border: 1px solid #cfe2e8; background: #e6eef0; }
.pale { opacity: .3; }

/* taskbar */
.taskbar { position: relative; z-index: 2; display: flex; align-items: center; height: 40px; }
.start { width: 48px; height: 40px; }
.tsearch { display: flex; align-items: center; gap: 12px; width: 344px; height: 40px; margin-right: 1px; padding: 0 12px; background: #fff; border: 1px solid #c5c9cc; }
.tsearch input { flex: 1; min-width: 0; font-size: 16px; color: #222; }
.task { width: 46px; height: 40px; margin-right: 2px; }
.tsearch + .task { margin-right: 5px; }
.live { border-bottom: 2px solid #0078d7; padding-top: 2px; }
.active { width: 48px; background: #e9f4f8; }
.inset { width: 40px; margin-left: 4px; }
.tray { display: flex; align-items: center; gap: 8px; }
.tray .chv { width: 12px; height: 7px; margin: 0 2px 0 18px; color: #111; }
.ime { font-size: 20px; line-height: 20px; }
.clock { display: flex; flex-direction: column; align-items: center; width: 92px; padding-bottom: 2px; }
.act { margin: 0 20px 0 6px; }
.peek { width: 5px; height: 40px; border-left: 1px solid #9aa2b4; }
```
